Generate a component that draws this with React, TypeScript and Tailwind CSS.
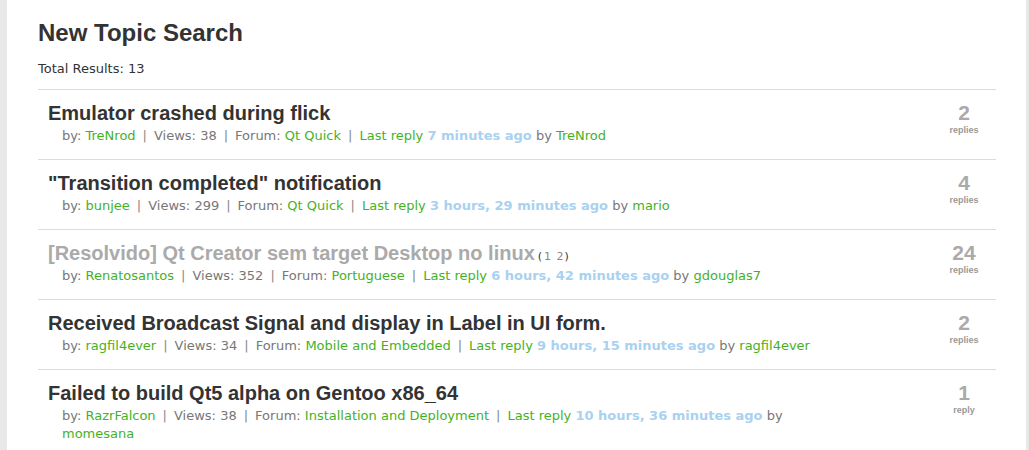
const topics = [
  {
    title: "Emulator crashed during flick",
    author: "TreNrod",
    views: 38,
    forum: "Qt Quick",
    when: "7 minutes ago",
    last: "TreNrod",
    replies: 2,
  },
  {
    title: "\"Transition completed\" notification",
    author: "bunjee",
    views: 299,
    forum: "Qt Quick",
    when: "3 hours, 29 minutes ago",
    last: "mario",
    replies: 4,
  },
  {
    title: "[Resolvido] Qt Creator sem target Desktop no linux",
    author: "Renatosantos",
    views: 352,
    forum: "Portuguese",
    when: "6 hours, 42 minutes ago",
    last: "gdouglas7",
    replies: 24,
    solved: true,
    pages: ["1", "2"],
  },
  {
    title: "Received Broadcast Signal and display in Label in UI form.",
    author: "ragfil4ever",
    views: 34,
    forum: "Mobile and Embedded",
    when: "9 hours, 15 minutes ago",
    last: "ragfil4ever",
    replies: 2,
  },
  {
    title: "Failed to build Qt5 alpha on Gentoo x86_64",
    author: "RazrFalcon",
    views: 38,
    forum: "Installation and Deployment",
    when: "10 hours, 36 minutes ago",
    last: "momesana",
    replies: 1,
  },
];

function Sep() {
  return <span className="text-[#888] mx-[7px]">|</span>;
}

export default function App() {
  return (
    <div className="flex w-[1029px] h-[450px] overflow-hidden bg-[#e8e8e8]">
      <div className="ml-[7px] mr-[3px] flex-1 bg-white pl-[31px] pr-[30px] pt-[19px]">
        <h1 className="text-[24px] font-bold text-[#333] font-['Liberation_Sans',Arial,sans-serif] leading-[28px]">
          New Topic Search
        </h1>
        <p className="mt-[14px] text-[13px] text-[#333] font-['DejaVu_Sans',Verdana,sans-serif] leading-[16px]">
          Total Results: 13
        </p>
        <div className="mt-[12px] border-t border-[#dcdcdc]">
          {topics.map((t) => (
            <div key={t.title} className="flex min-h-[70px] border-b border-[#dcdcdc]">
              <div className="flex-1 pl-[10px] pt-[11px] pb-[12px]">
                <h2
                  className={`h-[24px] text-[20px] font-bold leading-[24px] font-['Liberation_Sans',Arial,sans-serif] ${
                    t.solved ? "text-[#aaa]" : "text-[#333]"
                  }`}
                >
                  {t.title}
                  {t.pages && (
                    <span className="ml-[3px] text-[11px] leading-none font-normal text-[#333] font-['DejaVu_Sans',Verdana,sans-serif]">
                      (<span className="text-[#888] tracking-[1px] ml-[2px]">{t.pages.join(" ")}</span>)
                    </span>
                  )}
                </h2>
                <p className="mt-[2px] w-[790px] pl-[14px] text-[13px] leading-[18px] text-[#777] font-['DejaVu_Sans',Verdana,sans-serif]">
                  by: <span className="text-[#46b11f]">{t.author}</span>
                  <Sep />
                  Views: {t.views}
                  <Sep />
                  Forum: <span className="text-[#46b11f]">{t.forum}</span>
                  <Sep />
                  <span className="text-[#46b11f]">Last reply</span>{" "}
                  <span className="font-bold text-[#a9d1f0]">{t.when}</span> by{" "}
                  <span className="text-[#46b11f]">{t.last}</span>
                </p>
              </div>
              <div className="w-[64px] flex flex-col items-center pt-[11px] font-['Liberation_Sans',Arial,sans-serif] font-bold text-[#aaa]">
                <span className="text-[21px] leading-[24px]">{t.replies}</span>
                <span className="text-[9px] leading-[11px] text-[#999]">
                  {t.replies === 1 ? "reply" : "replies"}
                </span>
              </div>
            </div>
          ))}
        </div>
      </div>
    </div>
  );
}
